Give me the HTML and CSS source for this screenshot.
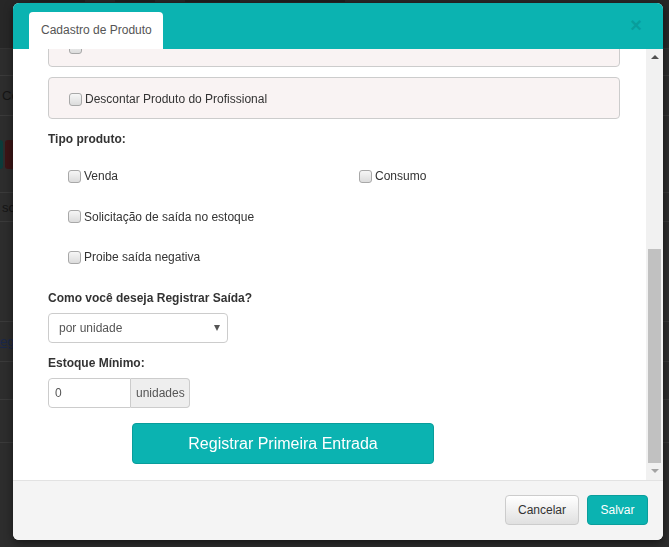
FILE: index.html
```html
<!DOCTYPE html>
<html lang="pt-BR">
<head>
<meta charset="utf-8">
<title>Cadastro de Produto</title>
<link rel="stylesheet" href="styles.css">
</head>
<body>
<div class="page">
  <div class="page-nav">
    <span class="nav-item w1"></span><span class="nav-item w2"></span><span class="nav-item w3"></span><span class="nav-item w4"></span>
  </div>
  <div class="page-row r1"></div>
  <div class="page-row r2"><span class="pg-text">Co</span></div>
  <div class="page-row r3"><span class="pg-btn teal"></span><span class="pg-btn red"></span></div>
  <div class="page-row r4"><span class="pg-text">sca</span></div>
  <div class="page-row r5"></div>
  <div class="page-row r6"><span class="pg-link">eg</span></div>
  <div class="page-row r7"></div>
  <div class="page-row r8"></div>
</div>

<div class="modal">
  <div class="modal-header">
    <div class="tab">Cadastro de Produto</div>
    <span class="close">×</span>
  </div>
  <div class="modal-body">
    <div class="scroll-area">
      <div class="content">
        <div class="option-box"><span class="cb"></span></div>
        <div class="option-box"><span class="cb"></span><span>Descontar Produto do Profissional</span></div>

        <div class="field-label first">Tipo produto:</div>
        <div class="check-grid">
          <div class="check-row"><span class="cb"></span><span>Venda</span></div>
          <div class="check-row"><span class="cb"></span><span>Consumo</span></div>
          <div class="check-row col1"><span class="cb"></span><span>Solicitação de saída no estoque</span></div>
          <div class="check-row col1"><span class="cb"></span><span>Proibe saída negativa</span></div>
        </div>

        <div class="field-label saida">Como você deseja Registrar Saída?</div>
        <div class="select"><span>por unidade</span><span class="caret"></span></div>

        <div class="field-label estoque">Estoque Mínimo:</div>
        <div class="input-group">
          <div class="input">0</div>
          <div class="addon">unidades</div>
        </div>

        <div class="btn-primeira">Registrar Primeira Entrada</div>
      </div>
    </div>
    <div class="scrollbar">
      <div class="sb-btn"><span class="tri-up"></span></div>
      <div class="sb-track"><div class="sb-thumb"></div></div>
      <div class="sb-btn"><span class="tri-down"></span></div>
    </div>
  </div>
  <div class="modal-footer">
    <div class="btn btn-default">Cancelar</div>
    <div class="btn btn-save">Salvar</div>
  </div>
</div>
</body>
</html>
```

FILE: styles.css
```css
html, body {
  margin: 0;
  padding: 0;
}
body {
  width: 669px;
  height: 547px;
  overflow: hidden;
  background: #2d2d2d;
  font-family: "Liberation Sans", Arial, sans-serif;
}

/* background page under the backdrop */
.page {
  display: flex;
  flex-direction: column;
}
.page-nav {
  height: 49px;
  background: #272727;
  border-bottom: 1px solid #333;
  box-sizing: border-box;
  display: flex;
  align-items: flex-start;
  gap: 30px;
  padding-left: 30px;
}
.nav-item {
  height: 2px;
  background: #1f1f1f;
}
.nav-item.w1 { width: 55px; }
.nav-item.w2 { width: 40px; }
.nav-item.w3 { width: 55px; }
.nav-item.w4 { width: 75px; }
.page-row {
  border-bottom: 1px solid #3a3a3a;
  box-sizing: border-box;
  display: flex;
  align-items: center;
  font-size: 13px;
  color: #151515;
  gap: 2px;
}
.r1 { height: 27px; }
.r2 { height: 40px; }
.r3 { height: 77px; }
.r4 { height: 29px; }
.r5 { height: 100px; }
.r6 { height: 40px; }
.r7 { height: 38px; }
.r8 { height: 43px; }
.pg-text { padding-left: 2px; }
.pg-link { color: #1a2748; text-decoration: underline; }
.pg-btn {
  width: 10px;
  height: 29px;
  border-radius: 3px;
}
.pg-btn.teal { background: #0c3b3a; margin-left: -7px; }
.pg-btn.red { background: #3c1516; }

/* modal */
.modal {
  position: fixed;
  left: 13px;
  top: 3px;
  width: 650px;
  height: 537px;
  border-radius: 6px;
  overflow: hidden;
  display: flex;
  flex-direction: column;
  background: #fff;
  box-shadow: 0 3px 9px rgba(0, 0, 0, 0.5);
}
.modal-header {
  height: 46px;
  flex-shrink: 0;
  background: #0bb3b1;
  display: flex;
  align-items: flex-end;
  padding: 0 21px 0 16px;
}
.tab {
  height: 37px;
  width: 134px;
  box-sizing: border-box;
  background: #fff;
  border-radius: 4px 4px 0 0;
  padding-left: 12px;
  line-height: 37px;
  font-size: 12px;
  color: #555;
}
.close {
  margin-left: auto;
  align-self: center;
  font-size: 20px;
  font-weight: bold;
  line-height: 20px;
  color: #089e9c;
  margin-top: -3px;
}

.modal-body {
  flex: 1;
  display: flex;
  min-height: 0;
}
.scroll-area {
  flex: 1;
  overflow: hidden;
  padding: 0 26px 0 35px;
}
.content {
  margin-top: -24px;
  font-size: 12px;
  color: #333;
}

.option-box {
  height: 42px;
  box-sizing: border-box;
  border: 1px solid #ccc;
  border-radius: 4px;
  background: #f9f3f3;
  display: flex;
  align-items: center;
  padding: 2px 0 0 20px;
  margin-bottom: 10px;
}

.cb {
  width: 13px;
  height: 13px;
  box-sizing: border-box;
  border: 1px solid #a8a8a8;
  border-radius: 3px;
  background: linear-gradient(#f6f6f6, #dcdcdc);
  margin-right: 3px;
  flex-shrink: 0;
}

.field-label {
  font-weight: bold;
  line-height: 20px;
}
.field-label.first { margin-top: 1px; }
.field-label.saida { margin-top: 21px; }
.field-label.estoque { margin-top: 10px; }

.check-grid {
  display: grid;
  grid-template-columns: 291px 1fr;
  row-gap: 20.5px;
  padding-left: 20px;
  margin-top: 17px;
}
.check-row {
  height: 20px;
  display: flex;
  align-items: center;
}
.check-row.col1 { grid-column: 1; }

.select {
  margin-top: 5px;
  width: 180px;
  height: 30px;
  box-sizing: border-box;
  border: 1px solid #ccc;
  border-radius: 4px;
  display: flex;
  align-items: center;
  padding: 0 7px 0 10px;
  color: #555;
}
.caret {
  margin-left: auto;
  width: 0;
  height: 0;
  border-left: 3.5px solid transparent;
  border-right: 3.5px solid transparent;
  border-top: 6px solid #555;
}

.input-group {
  margin-top: 5px;
  display: flex;
  height: 30px;
}
.input {
  width: 83px;
  box-sizing: border-box;
  border: 1px solid #ccc;
  border-radius: 4px 0 0 4px;
  padding-left: 6px;
  line-height: 28px;
  color: #555;
}
.addon {
  width: 59px;
  box-sizing: border-box;
  border: 1px solid #ccc;
  border-left: 0;
  border-radius: 0 4px 4px 0;
  background: #eee;
  padding-left: 5px;
  line-height: 28px;
  color: #555;
}

.btn-primeira {
  margin: 15px 0 0 84px;
  width: 302px;
  height: 41px;
  box-sizing: border-box;
  background: #0bb3b1;
  border: 1px solid #099d9b;
  border-radius: 4px;
  color: #fff;
  font-size: 16px;
  display: flex;
  align-items: center;
  justify-content: center;
}

/* fake scrollbar */
.scrollbar {
  width: 17px;
  flex-shrink: 0;
  background: #f1f1f1;
  display: flex;
  flex-direction: column;
}
.sb-btn {
  height: 17px;
  flex-shrink: 0;
  display: flex;
  align-items: center;
  justify-content: center;
}
.tri-up {
  width: 0;
  height: 0;
  border-left: 4px solid transparent;
  border-right: 4px solid transparent;
  border-bottom: 4px solid #505050;
  margin-top: -1px;
}
.tri-down {
  width: 0;
  height: 0;
  border-left: 4px solid transparent;
  border-right: 4px solid transparent;
  border-top: 4px solid #a3a3a3;
  margin-top: -2px;
}
.sb-track {
  flex: 1;
  display: flex;
  flex-direction: column;
  justify-content: flex-end;
}
.sb-thumb {
  height: 214px;
  margin: 0 2px;
  background: #c1c1c1;
}

.modal-footer {
  flex-shrink: 0;
  border-top: 1px solid #e2e2e2;
  background: #f4f4f4;
  padding: 14px 15px 15px;
  display: flex;
  justify-content: flex-end;
  gap: 8px;
}
.btn {
  height: 30px;
  box-sizing: border-box;
  border-radius: 4px;
  font-size: 12px;
  display: flex;
  align-items: center;
  justify-content: center;
}
.btn-default {
  width: 74px;
  border: 1px solid #ccc;
  background: linear-gradient(#ffffff, #e0e0e0);
  color: #333;
}
.btn-save {
  width: 61px;
  border: 1px solid #0a9e9c;
  background: #0bb3b1;
  color: #fff;
}
```
